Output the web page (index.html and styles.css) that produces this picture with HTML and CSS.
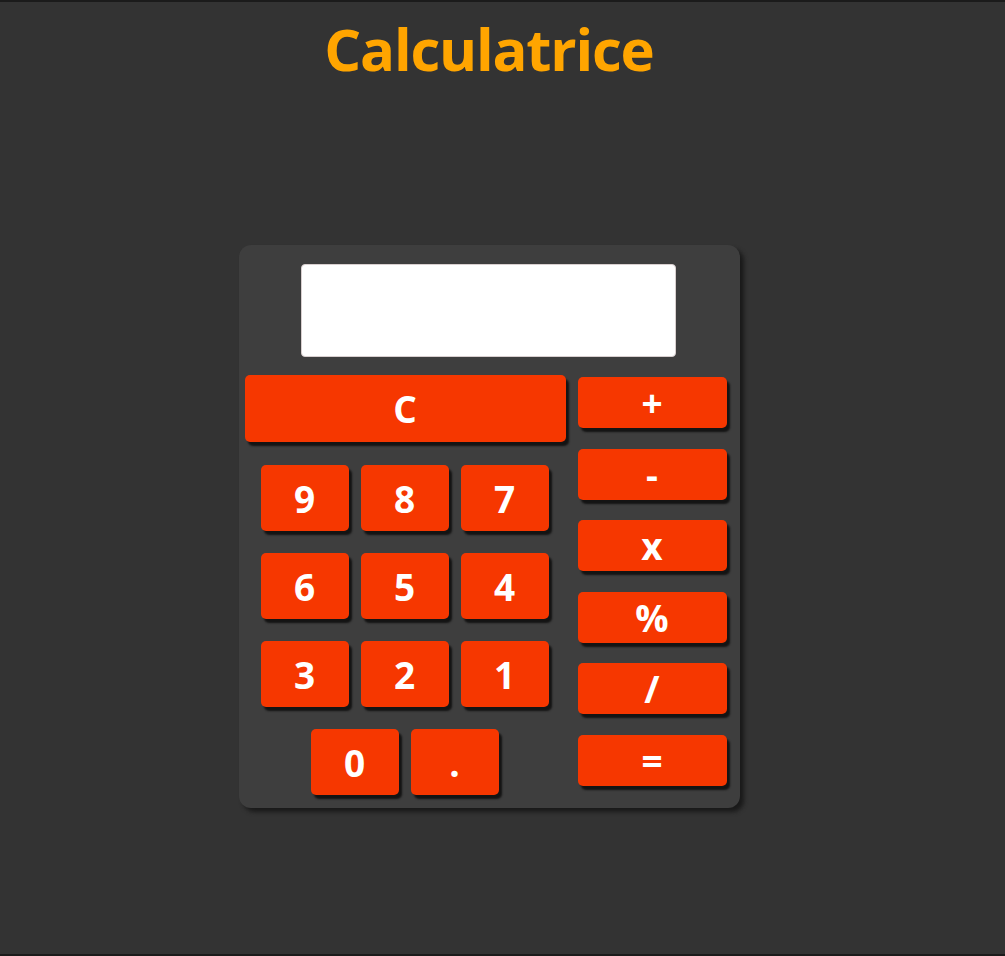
FILE: index.html
```html
<!DOCTYPE html>
<html lang="fr">
<head>
<meta charset="utf-8">
<title>Calculatrice</title>
<link rel="stylesheet" href="styles.css">
</head>
<body>
<main class="page">
  <h1 class="title">Calculatrice</h1>
  <div class="calc">
    <div class="screen"></div>
    <div class="keys">
      <div class="left">
        <button class="btn btn-clear">C</button>
        <div class="pad">
          <button class="btn num">9</button>
          <button class="btn num">8</button>
          <button class="btn num">7</button>
          <button class="btn num">6</button>
          <button class="btn num">5</button>
          <button class="btn num">4</button>
          <button class="btn num">3</button>
          <button class="btn num">2</button>
          <button class="btn num">1</button>
          <button class="btn num">0</button>
          <button class="btn num">.</button>
        </div>
      </div>
      <div class="ops">
        <button class="btn op">+</button>
        <button class="btn op">-</button>
        <button class="btn op">x</button>
        <button class="btn op">%</button>
        <button class="btn op">/</button>
        <button class="btn op">=</button>
      </div>
    </div>
  </div>
</main>
</body>
</html>
```
FILE: styles.css
```css
html {
  background: #1b1b1b;
}
body {
  margin: 2px 0 0;
  height: 952px;
  background: #333333;
  font-family: "Open Sans", "Noto Sans", "Liberation Sans", sans-serif;
}
.page {
  width: 978px;
  display: flex;
  flex-direction: column;
  align-items: center;
}
.title {
  margin: 12px 0 0;
  font-size: 58px;
  line-height: 70px;
  font-weight: 700;
  color: #ffa500;
  letter-spacing: -1.2px;
}
.calc {
  margin-top: 161px;
  width: 501px;
  height: 563px;
  box-sizing: border-box;
  padding-top: 19px;
  background: #3e3e3e;
  border-radius: 12px;
  box-shadow: 4px 4px 4px #1a1a1a;
}
.screen {
  width: 375px;
  height: 93px;
  margin: 0 0 0 62px;
  background: #ffffff;
  border-radius: 4px;
  border: 1px solid #d8cfcf;
  box-sizing: border-box;
}
.keys {
  display: flex;
  margin-top: 18px;
  padding-left: 6px;
}
.left {
  width: 321px;
}
.btn {
  border: none;
  padding: 0;
  background: #f63700;
  color: #ffffff;
  font-family: inherit;
  font-weight: 700;
  font-size: 37px;
  line-height: 1;
  border-radius: 5px;
  box-shadow: 3px 4px 2px #141414;
  display: flex;
  align-items: center;
  justify-content: center;
}
.btn-clear {
  width: 321px;
  height: 67px;
}
.pad {
  margin: 23px 0 0 16px;
  width: 288px;
  display: flex;
  flex-wrap: wrap;
  justify-content: center;
  gap: 22px 12px;
}
.num {
  width: 88px;
  height: 66px;
}
.ops {
  margin: 2px 0 0 12px;
  display: flex;
  flex-direction: column;
  gap: 20.6px;
}
.op {
  width: 149px;
  height: 51px;
}
```
